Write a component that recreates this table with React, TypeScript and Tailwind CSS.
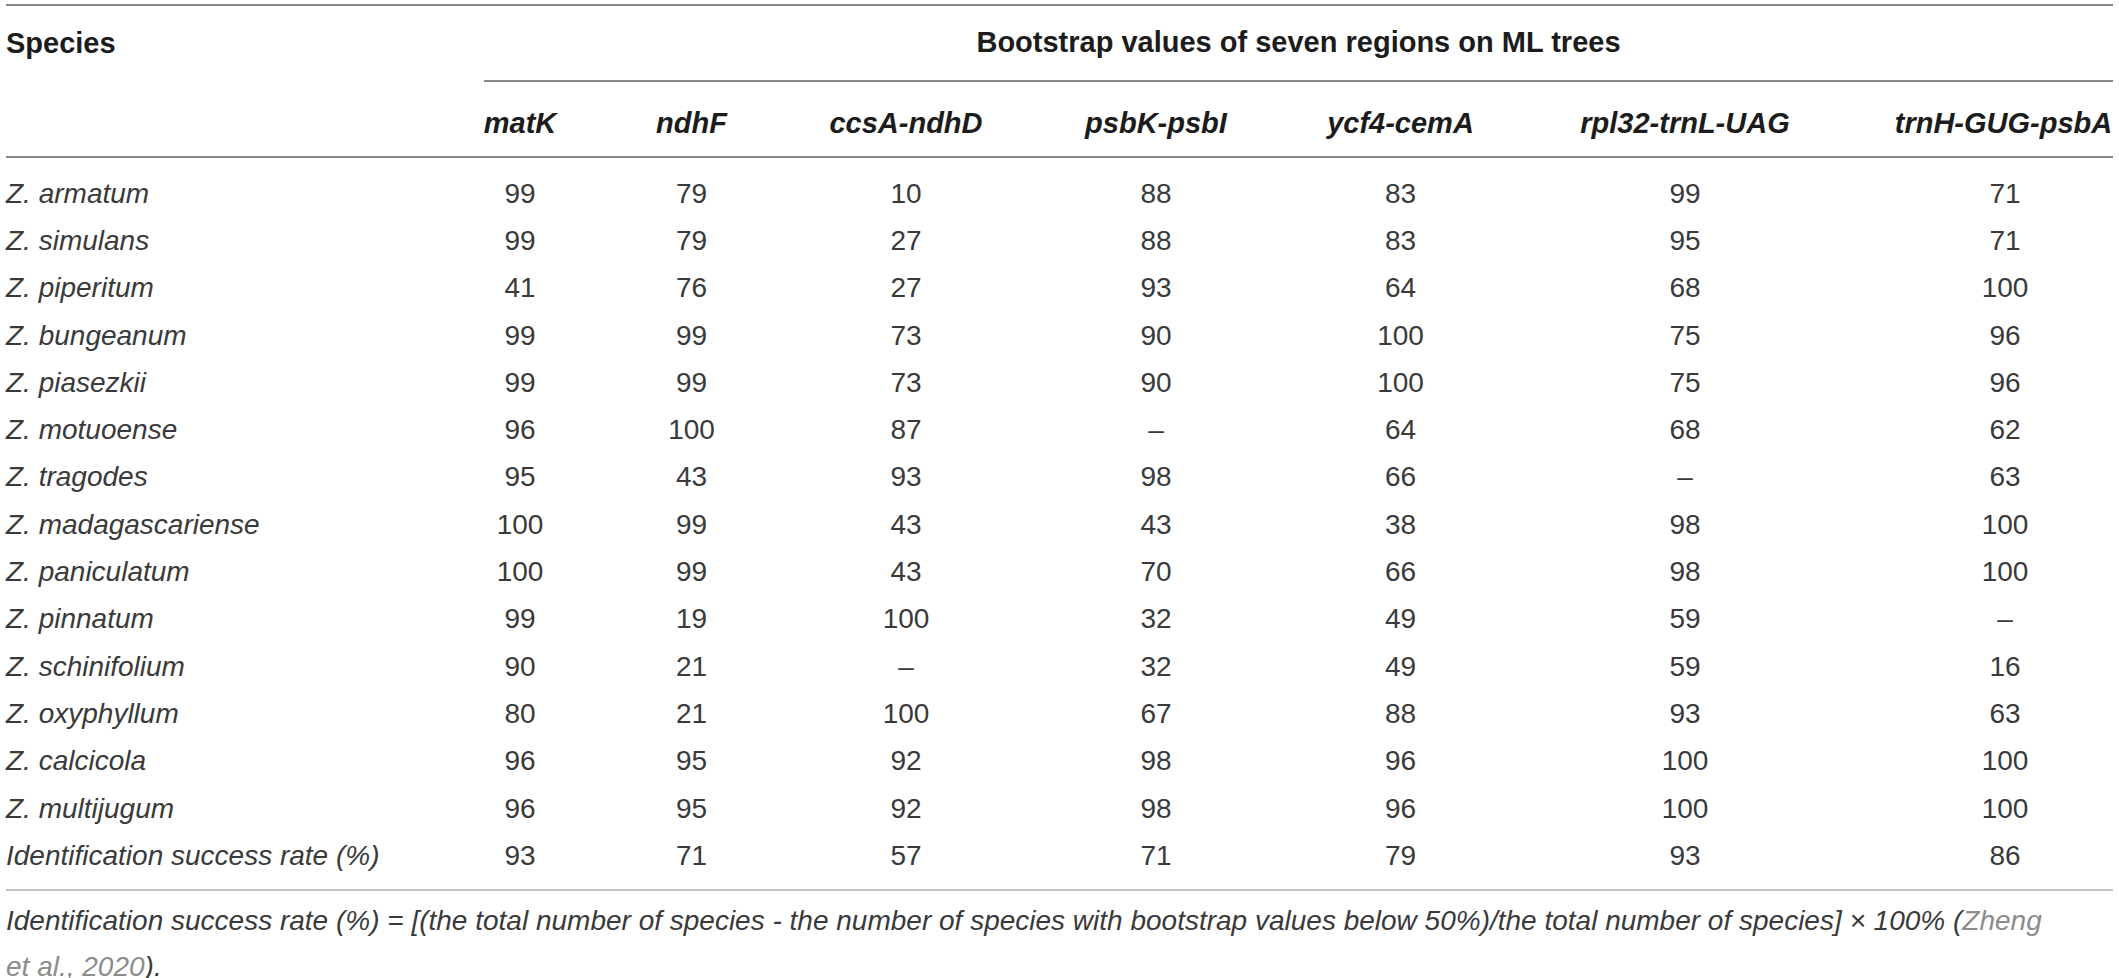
const regions = [
  'matK',
  'ndhF',
  'ccsA-ndhD',
  'psbK-psbI',
  'ycf4-cemA',
  'rpl32-trnL-UAG',
  'trnH-GUG-psbA',
];

const rows: [string, string[]][] = [
  ['Z. armatum', ['99', '79', '10', '88', '83', '99', '71']],
  ['Z. simulans', ['99', '79', '27', '88', '83', '95', '71']],
  ['Z. piperitum', ['41', '76', '27', '93', '64', '68', '100']],
  ['Z. bungeanum', ['99', '99', '73', '90', '100', '75', '96']],
  ['Z. piasezkii', ['99', '99', '73', '90', '100', '75', '96']],
  ['Z. motuoense', ['96', '100', '87', '–', '64', '68', '62']],
  ['Z. tragodes', ['95', '43', '93', '98', '66', '–', '63']],
  ['Z. madagascariense', ['100', '99', '43', '43', '38', '98', '100']],
  ['Z. paniculatum', ['100', '99', '43', '70', '66', '98', '100']],
  ['Z. pinnatum', ['99', '19', '100', '32', '49', '59', '–']],
  ['Z. schinifolium', ['90', '21', '–', '32', '49', '59', '16']],
  ['Z. oxyphyllum', ['80', '21', '100', '67', '88', '93', '63']],
  ['Z. calcicola', ['96', '95', '92', '98', '96', '100', '100']],
  ['Z. multijugum', ['96', '95', '92', '98', '96', '100', '100']],
  ['Identification success rate (%)', ['93', '71', '57', '71', '79', '93', '86']],
];

const grid = 'grid grid-cols-[430px_168px_175px_254px_246px_243px_326px_1fr]';

export default function App() {
  return (
    <div className="min-h-screen bg-white px-[6px] pt-[4px] font-['Liberation_Sans',Arial,sans-serif] text-[#3a3a3a]">
      <div className="border-t-2 border-[#8a8a8a]">
        {/* header */}
        <div className={grid}>
          <div className="flex h-[76px] items-center text-[29px] font-bold text-[#1c1c1c]">Species</div>
          <div className="col-span-7 flex h-[76px] items-end">
            <div className="ml-[48px] flex h-full flex-1 items-center justify-center border-b-2 border-[#8a8a8a] text-[29px] font-bold text-[#1c1c1c]">
              Bootstrap values of seven regions on ML trees
            </div>
          </div>
        </div>
        <div className={`${grid} border-b-2 border-[#8a8a8a]`}>
          <div className="h-[74px]" />
          {regions.map((r, i) => (
            <div
              key={r}
              className={`flex h-[74px] items-center justify-center whitespace-nowrap pt-[10px] text-[29px] font-bold italic text-[#1c1c1c] ${i === 6 ? 'pl-[46px]' : ''}`}
            >
              {r}
            </div>
          ))}
        </div>

        {/* body */}
        <div className="pt-[12px] pb-[10px] text-[28px] border-b-2 border-[#c4c4c4]">
          {rows.map(([name, vals]) => (
            <div key={name} className={`${grid} h-[47.3px] items-center`}>
              <div className="italic">{name}</div>
              {vals.map((v, i) => (
                <div key={i} className={`text-center ${i === 6 ? 'pl-[49px]' : ''}`}>
                  {v}
                </div>
              ))}
            </div>
          ))}
        </div>

        {/* footnote */}
        <p className="pt-[7px] text-[28px] italic leading-[46px]">
          Identification success rate (%) = [(the total number of species - the number of species with bootstrap values below 50%)/the total number of species] × 100% (<span className="text-[#8c8c8c]">Zheng</span>
          <br />
          <span className="text-[#8c8c8c]">et al., 2020</span>).
        </p>
      </div>
    </div>
  );
}
